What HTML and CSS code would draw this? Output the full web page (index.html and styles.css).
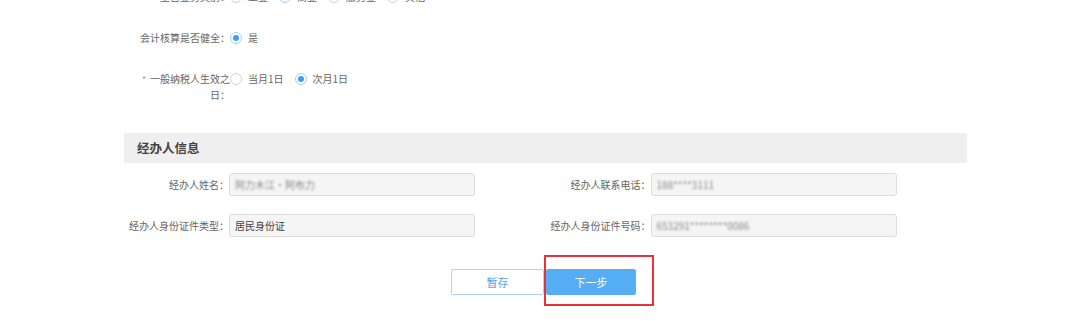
FILE: index.html
```html
<!DOCTYPE html>
<html lang="zh-CN">
<head>
<meta charset="utf-8">
<title>经办人信息</title>
<link rel="stylesheet" href="styles.css">
</head>
<body>
<div class="page">
  <div class="radio-rows">
    <div class="radio-row">
      <div class="r-label"><span class="req">*</span>主营业务类别：</div>
      <div class="options">
        <label class="opt"><span class="radio"></span>工业</label>
        <label class="opt"><span class="radio checked"></span>商业</label>
        <label class="opt"><span class="radio"></span>服务业</label>
        <label class="opt"><span class="radio"></span>其他</label>
      </div>
    </div>
    <div class="radio-row">
      <div class="r-label">会计核算是否健全：</div>
      <div class="options">
        <label class="opt"><span class="radio checked"></span>是</label>
      </div>
    </div>
    <div class="radio-row tall">
      <div class="r-label wrap"><span class="req">*</span>一般纳税人生效之日：</div>
      <div class="options">
        <label class="opt"><span class="radio"></span>当月1日</label>
        <label class="opt"><span class="radio checked"></span>次月1日</label>
      </div>
    </div>
  </div>

  <div class="section-head">经办人信息</div>

  <div class="fields">
    <div class="field">
      <div class="f-label">经办人姓名：</div>
      <div class="f-input"><span class="masked">阿力木江·阿布力</span></div>
    </div>
    <div class="field">
      <div class="f-label">经办人联系电话：</div>
      <div class="f-input"><span class="masked">188****3111</span></div>
    </div>
    <div class="field">
      <div class="f-label">经办人身份证件类型：</div>
      <div class="f-input">居民身份证</div>
    </div>
    <div class="field">
      <div class="f-label">经办人身份证件号码：</div>
      <div class="f-input"><span class="masked">653291********0086</span></div>
    </div>
  </div>

  <div class="actions">
    <button class="btn btn-ghost">暂存</button>
    <button class="btn btn-primary">下一步<span class="highlight"></span></button>
  </div>
</div>
</body>
</html>
```

FILE: styles.css
```css
* { box-sizing: border-box; }
html, body { margin: 0; padding: 0; background: #fff; }
body {
  font-family: "Noto Sans CJK SC", "Noto Sans", sans-serif;
  font-size: 10px;
  color: #666;
  overflow: hidden;
  height: 321px;
}
.page {
  width: 843px;
  margin-left: 124px;
}
.radio-rows {
  margin-top: -11px;
}
.radio-row {
  display: flex;
  align-items: flex-start;
  height: 41px;
  line-height: 16px;
}
.radio-row.tall { height: 62px; }
.r-label {
  width: 106px;
  text-align: right;
  flex: none;
}
.r-label.wrap {
  padding-left: 25px;
  position: relative;
}
.req {
  color: #f7803c;
  margin-right: 3px;
}
.r-label.wrap .req {
  position: absolute;
  left: 18px;
  top: 1px;
  font-size: 9px;
}
.options {
  display: flex;
  gap: 11px;
}
.opt {
  display: flex;
  align-items: center;
  gap: 6px;
  height: 16px;
  color: #666;
}
.radio {
  width: 12px;
  height: 12px;
  border-radius: 50%;
  border: 1px solid #d3d3d3;
  background: #fff;
  display: inline-block;
  position: relative;
}
.radio.checked {
  border-color: #a3d0f6;
}
.radio.checked::after {
  content: "";
  position: absolute;
  left: 2px;
  top: 2px;
  width: 6px;
  height: 6px;
  border-radius: 50%;
  background: #3d9ef0;
}
.section-head {
  height: 30px;
  background: #efefef;
  line-height: 30px;
  padding-left: 13px;
  font-size: 12.5px;
  font-weight: bold;
  color: #444;
}
.fields {
  display: grid;
  grid-template-columns: 1fr 1fr;
  row-gap: 18px;
  margin-top: 10px;
}
.field {
  display: flex;
  align-items: center;
}
.f-label {
  width: 105px;
  flex: none;
  text-align: right;
  color: #666;
}
.f-input {
  width: 246px;
  height: 23px;
  line-height: 21px;
  background: #f5f5f5;
  border: 1px solid #dcdcdc;
  border-radius: 3px;
  padding-left: 5px;
  color: #444;
}
.masked {
  color: #888;
  filter: blur(1px);
}
.actions {
  display: flex;
  justify-content: center;
  gap: 2px;
  margin-top: 32px;
  padding-right: 4px;
}
.btn {
  height: 26px;
  border-radius: 2px;
  font-family: inherit;
  font-size: 11px;
  padding: 0;
  cursor: pointer;
}
.btn-ghost {
  width: 93px;
  background: #fff;
  border: 1px solid #a9d5f8;
  color: #4fa6ee;
}
.btn-primary {
  width: 90px;
  background: #55adf3;
  border: 1px solid #55adf3;
  color: #fff;
  position: relative;
}
.highlight {
  position: absolute;
  left: -3px;
  top: -15px;
  width: 110px;
  height: 51px;
  border: 2px solid #e5323c;
  pointer-events: none;
}
```
